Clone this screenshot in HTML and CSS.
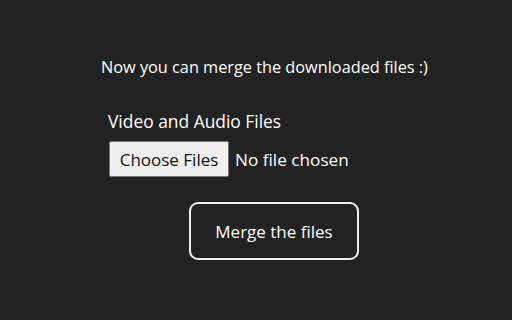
FILE: index.html
```html
<!DOCTYPE html>
<html>
<head>
<meta charset="utf-8">
<link rel="stylesheet" href="styles.css">
</head>
<body>
<main class="page">
  <p class="intro">Now you can merge the downloaded files :)</p>
  <div class="field">
    <label class="label" for="files">Video and Audio Files</label>
    <div class="picker">
      <span class="choose">Choose Files</span>
      <span class="status">No file chosen</span>
    </div>
  </div>
  <div class="actions">
    <button class="merge">Merge the files</button>
  </div>
</main>
</body>
</html>
```
FILE: styles.css
```css
html, body {
  margin: 0;
  padding: 0;
  background: #222222;
  width: 512px;
  height: 320px;
  overflow: hidden;
}
.page {
  font-family: "Open Sans", "Noto Sans", sans-serif;
  color: #ffffff;
  display: flex;
  flex-direction: column;
  padding-top: 56px;
}
.intro {
  margin: 0 0 0 101px;
  font-size: 16.3px;
  line-height: 22px;
}
.field {
  margin: 31px 0 0 108px;
  display: flex;
  flex-direction: column;
  gap: 8px;
}
.label {
  font-size: 17.4px;
  line-height: 24px;
}
.picker {
  display: flex;
  align-items: center;
  gap: 6px;
  margin-left: 1px;
}
.choose {
  box-sizing: border-box;
  width: 120px;
  height: 36px;
  background: #efefef;
  border: 1px solid #767676;
  border-radius: 2px;
  color: #111111;
  font-size: 17px;
  display: flex;
  align-items: center;
  justify-content: center;
}
.status {
  font-size: 17.2px;
}
.actions {
  margin: 25px 0 0 189px;
}
.merge {
  box-sizing: border-box;
  width: 170px;
  height: 58px;
  background: transparent;
  border: 2px solid #f0f0f0;
  border-radius: 9px;
  color: #ffffff;
  font-family: inherit;
  font-size: 17px;
  padding: 0;
}
```
